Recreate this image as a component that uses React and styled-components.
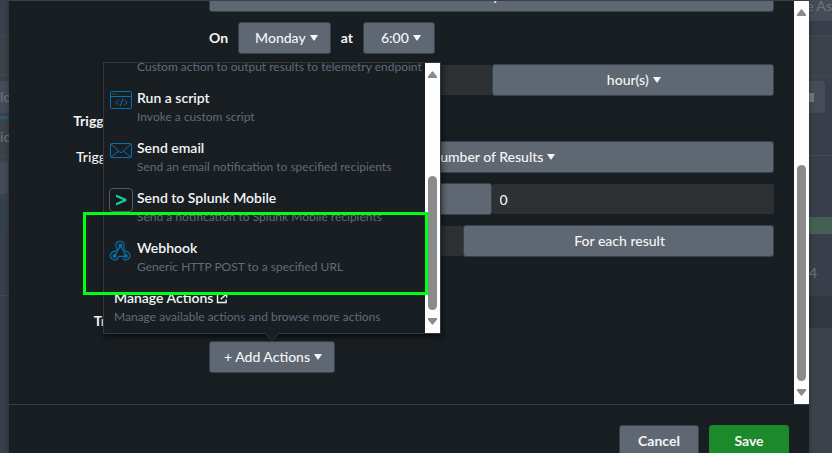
import React from 'react';
import styled, { createGlobalStyle, css } from 'styled-components';

const color = {
  surface: '#191e22',
  field: '#2d3134',
  button: '#5f6773',
  edge: '#36434f',
  text: '#f4f5f6',
  muted: '#626b79',
  icon: '#0a70ad',
  thumb: '#8b8b8b',
  save: '#1c8a2b',
  marker: '#00ff10',
};

const GlobalStyle = createGlobalStyle`
  *, *::before, *::after { box-sizing: border-box; }
  body {
    margin: 0;
    overflow: hidden;
    background: #383f4a;
    color: ${color.text};
    font: 500 14px/20px Lato, "Liberation Sans", sans-serif;
  }
  button, input { font: inherit; color: inherit; }
`;

const Page = styled.div`
  display: grid;
  grid-template-columns: 9px minmax(0, 1fr) 23px;
  height: 100vh;
  overflow: hidden;
`;

const Backdrop = styled.div`
  display: flex;
  flex-direction: column;
  overflow: hidden;
  white-space: nowrap;
  color: #6d737b;
`;

const Band = styled.div`
  display: flex;
  flex: none;
  align-items: center;
  justify-content: ${(p) => (p.$end ? 'flex-end' : 'flex-start')};
  height: ${(p) => p.$h}px;
  background: ${(p) => p.$tone};
  ${(p) => p.$line && css`border-bottom: 1px solid #434951;`}
  ${(p) => p.$fill && css`flex: 1;`}
`;

const BackdropButton = styled.div`
  display: flex;
  flex: none;
  align-items: center;
  width: ${(p) => p.$w}px;
  height: 32px;
  border-radius: 0 4px 4px 0;
  background: #454c57;
`;

const Square = styled.span`
  width: 5px;
  height: 9px;
  background: #73767b;
`;

const Modal = styled.main`
  display: flex;
  flex-direction: column;
  overflow: hidden;
  border-top: 1px solid ${color.edge};
  background: ${color.surface};
  box-shadow: 0 0 5px rgba(0, 0, 0, 0.35);
  z-index: 1;
`;

const Body = styled.div`
  display: flex;
  flex: none;
  overflow: hidden;
`;

const Form = styled.form`
  display: flex;
  flex: 1;
  flex-direction: column;
  gap: 10px;
  min-width: 0;
  margin-top: -21px;
  padding: 0 20px 31px 0;
`;

const Row = styled.div`
  display: grid;
  grid-template-columns: 178px minmax(0, 1fr);
  column-gap: 22px;
  align-items: center;
  min-height: 32px;
`;

const Label = styled.label`
  text-align: right;
  white-space: nowrap;
`;

const Heading = styled.h2`
  width: 178px;
  margin: ${(p) => (p.$far ? 44 : 5)}px 0 0;
  text-align: right;
  white-space: nowrap;
  font: inherit;
  font-weight: 700;
`;

const Controls = styled.div`
  display: grid;
  grid-column: 2;
  grid-template-columns: ${(p) => p.$cols || '1fr'};
  align-items: center;
`;

const Button = styled.button`
  display: flex;
  align-items: center;
  justify-content: center;
  gap: 4px;
  min-width: 72px;
  height: 32px;
  padding: 0 12px 0 14px;
  border: 1px solid ${color.edge};
  border-radius: 3px;
  background: ${color.button};
  white-space: nowrap;
  cursor: pointer;
`;

const Sentence = styled.div`
  display: flex;
  grid-column: 2;
  align-items: center;
  gap: 10px;

  ${Button} { padding-left: 16px; }
`;

const Word = styled.span`
  font-weight: 700;
`;

const FooterButton = styled(Button)`
  width: 80px;
  padding: 0 8px;
  font-weight: 700;
  ${(p) => p.$primary && css`
    border-color: ${color.save};
    background: ${color.save};
  `}
`;

const Field = styled.input`
  width: 100%;
  min-width: 0;
  height: 30px;
  padding: 0 8px;
  border: 0;
  border-radius: 2px;
  outline: 0;
  background: ${color.field};
`;

const Anchor = styled.div`
  position: relative;
  justify-self: start;
`;

const Popover = styled.div`
  position: absolute;
  bottom: calc(100% + 7px);
  left: 50%;
  width: 338px;
  transform: translateX(-50%);
  border: 1px solid #33383d;
  background: ${color.surface};
  box-shadow: 1px 3px 6px rgba(0, 0, 0, 0.6);

  &::after {
    content: '';
    position: absolute;
    top: calc(100% - 4px);
    left: calc(50% - 5px);
    width: 10px;
    height: 10px;
    transform: rotate(45deg);
    border: solid #2c3136;
    border-width: 0 1px 1px 0;
    background: ${color.surface};
  }
`;

const PopoverBody = styled.div`
  display: flex;
  height: 270px;
  overflow: hidden;
`;

const Menu = styled.ul`
  flex: 1;
  margin: -25px 0 0;
  padding: 0;
  list-style: none;
`;

const Item = styled.li`
  display: flex;
  gap: 4px;
  height: 50px;
  padding-left: ${(p) => (p.$plain ? 10 : 5)}px;
`;

const ItemText = styled.div`
  display: grid;
  grid-template-rows: 20px 18px;
`;

const IconBox = styled.span`
  display: flex;
  width: 24px;
  height: 24px;
`;

const ItemTitle = styled.a`
  display: flex;
  align-items: center;
  gap: 3px;
  color: inherit;
  font-weight: 600;
  text-decoration: none;
`;

const ItemNote = styled.p`
  margin: 0;
  color: ${color.muted};
  font-size: 12px;
  font-weight: 400;
  line-height: 18px;
  white-space: nowrap;
`;

const Marker = styled.div`
  position: absolute;
  top: 149px;
  right: 12px;
  left: -21px;
  height: 83px;
  border: 3px solid ${color.marker};
  z-index: 2;
`;

const Bar = styled.div`
  display: flex;
  flex: none;
  flex-direction: column;
  align-items: center;
  width: 15px;
  padding: 8px 0;
  background: #fdfdfd;
`;

const Track = styled.div`
  display: flex;
  flex: 1;
  flex-direction: column;
  justify-content: flex-end;
  padding: 8px 0;
`;

const Thumb = styled.div`
  width: 9px;
  height: ${(p) => p.$size}px;
  border-radius: 5px;
  background: ${color.thumb};
`;

const Footer = styled.footer`
  display: flex;
  flex: none;
  justify-content: flex-end;
  gap: 10px;
  padding: 20px;
  border-top: 1px solid #2f3d49;
`;

const Svg = styled.svg`
  flex: none;
  display: block;
`;

const Caret = () => (
  <Svg width="8" height="6" viewBox="0 0 8 6" aria-hidden="true">
    <path d="M0 0h8L4.6 5.2Q4 6 3.4 5.2z" fill="currentColor" />
  </Svg>
);

const Arrow = ({ down }) => (
  <Svg width="9" height="7" viewBox="0 0 9 7" aria-hidden="true">
    <path
      d={down ? 'M0 0h9v1.5L5.3 6.3q-.8.9-1.6 0L0 1.5z' : 'M0 7h9V5.5L5.3.7q-.8-.9-1.6 0L0 5.5z'}
      fill={color.thumb}
    />
  </Svg>
);

const ScrollBar = ({ size }) => (
  <Bar>
    <Arrow />
    <Track>
      <Thumb $size={size} />
    </Track>
    <Arrow down />
  </Bar>
);

const ScriptIcon = () => (
  <Svg width="24" height="24" viewBox="0 0 24 24" fill="none" stroke={color.icon}>
    <rect x="1.5" y="3.5" width="21" height="17" rx="1" />
    <path d="M2 8.5h20" />
    <path d="M3 6h1M5 6h1M7 6h1" />
    <path d="M10 11.5 7 14.5l3 3M15 11.5l3 3-3 3M13.8 10.5l-2.4 7.5" />
  </Svg>
);

const MailIcon = () => (
  <Svg width="24" height="24" viewBox="0 0 24 24" fill="none" stroke={color.icon}>
    <rect x="1.5" y="5.5" width="21" height="14" rx="1" />
    <path d="M2 6l8.6 8q1.4 1.2 2.8 0L22 6M2 19l7.5-6M22 19l-7.5-6" />
  </Svg>
);

const MobileIcon = () => (
  <Svg width="24" height="24" viewBox="0 0 24 24" fill="none">
    <rect x="0.5" y="0.5" width="23" height="23" rx="3.5" fill="#171b1f" stroke="#555a5f" />
    <path d="M7 6.4 17.4 11v1.9L7 17.5v-2.6l7.3-2.9L7 9z" fill="#12cfa5" />
  </Svg>
);

const WebhookIcon = () => (
  <Svg width="24" height="24" viewBox="0 0 24 24" fill="none" stroke={color.icon} strokeWidth="1.2">
    <path d="M8.4 10.8A4.2 4.2 0 1 1 14.6 9.8L16.6 13.4A4.2 4.2 0 1 1 13.6 20.4" />
    <path d="M8.4 10.8 6.6 13.6A4.2 4.2 0 1 0 9.7 18.4H16" />
    <path d="M11.5 7.6 8.4 13.2 6 17.8M11.5 7.6l2.9 5.6 2.6 4.6" />
    <g fill={color.icon} stroke="none">
      <circle cx="11.5" cy="7.6" r="2" />
      <circle cx="5.6" cy="18" r="2" />
      <circle cx="16.8" cy="18" r="2" />
    </g>
  </Svg>
);

const ExternalIcon = () => (
  <Svg width="12" height="12" viewBox="0 0 12 12" fill="none" stroke="currentColor" strokeWidth="1.4">
    <path d="M4 2.2H1.5v8.3h8.6V7.4M6.2 1.5h4.4v4.2M10.2 1.9 4.8 7.3" />
  </Svg>
);

const actions = [
  { id: 'telemetry', note: 'Custom action to output results to telemetry endpoint' },
  { id: 'script', icon: <ScriptIcon />, title: 'Run a script', note: 'Invoke a custom script' },
  { id: 'email', icon: <MailIcon />, title: 'Send email', note: 'Send an email notification to specified recipients' },
  { id: 'mobile', icon: <MobileIcon />, title: 'Send to Splunk Mobile', note: 'Send a notification to Splunk Mobile recipients' },
  { id: 'webhook', icon: <WebhookIcon />, title: 'Webhook', note: 'Generic HTTP POST to a specified URL' },
];

const Dropdown = ({ children, ...rest }) => (
  <Button type="button" aria-haspopup="listbox" {...rest}>
    {children}
    {children && <Caret />}
  </Button>
);

const ActionsMenu = () => (
  <Popover>
    <PopoverBody>
      <Menu>
        {actions.map((a) => (
          <Item key={a.id}>
            <IconBox>{a.icon}</IconBox>
            <ItemText>
              <ItemTitle href="#">{a.title}</ItemTitle>
              <ItemNote>{a.note}</ItemNote>
            </ItemText>
          </Item>
        ))}
        <Item $plain>
          <ItemText>
            <ItemTitle href="#">
              Manage Actions <ExternalIcon />
            </ItemTitle>
            <ItemNote>Manage available actions and browse more actions</ItemNote>
          </ItemText>
        </Item>
      </Menu>
      <ScrollBar size={134} />
    </PopoverBody>
    <Marker />
  </Popover>
);

export default function App() {
  return (
    <>
      <GlobalStyle />
      <Page>
        <Backdrop aria-hidden="true">
          <Band $h={36} $tone="#3a414c" $line />
          <Band $h={40} $tone="#3c4249" $line />
          <Band $h={5} $tone="#3a414a" />
          <BackdropButton $w={9}>lo</BackdropButton>
          <Band $h={3} $tone="#3a414a" />
          <Band $h={3} $tone="#2c5775" />
          <Band $h={37} $tone="#3b424a" $line>ic</Band>
          <Band $h={6} $tone="#3b424a" />
          <BackdropButton $w={8} />
          <Band $h={5} $tone="#3b424a" />
          <Band $h={35} $tone="#34414d" />
          <Band $h={62} $tone="#383f4a" $line />
          <Band $fill $tone="#383f4a" />
        </Backdrop>

        <Modal>
          <Body>
            <Form>
              <Row>
                <Controls>
                  <Dropdown>Run every week</Dropdown>
                </Controls>
              </Row>
              <Row>
                <Sentence>
                  <Word>On</Word>
                  <Dropdown>Monday</Dropdown>
                  <Word>at</Word>
                  <Dropdown>6:00</Dropdown>
                </Sentence>
              </Row>
              <Row>
                <Controls $cols="1fr 1fr">
                  <Field aria-label="Expires" />
                  <Dropdown>hour(s)</Dropdown>
                </Controls>
              </Row>
              <Heading>Trigger Conditions</Heading>
              <Row>
                <Label htmlFor="trigger">Trigger alert when</Label>
                <Controls>
                  <Dropdown id="trigger">Number of Results</Dropdown>
                </Controls>
              </Row>
              <Row>
                <Controls $cols="1fr 1fr">
                  <Dropdown aria-label="Comparison" />
                  <Field aria-label="Count" defaultValue="0" />
                </Controls>
              </Row>
              <Row>
                <Controls $cols="9fr 11fr">
                  <Field aria-label="Trigger" />
                  <Button type="button">For each result</Button>
                </Controls>
              </Row>
              <Heading $far>Trigger Actions</Heading>
              <Row>
                <Controls>
                  <Anchor>
                    <Dropdown>+ Add Actions</Dropdown>
                    <ActionsMenu />
                  </Anchor>
                </Controls>
              </Row>
            </Form>
            <ScrollBar size={216} />
          </Body>
          <Footer>
            <FooterButton type="button">Cancel</FooterButton>
            <FooterButton type="button" $primary>Save</FooterButton>
          </Footer>
        </Modal>

        <Backdrop aria-hidden="true">
          <Band $h={11} $tone="#454c57" $end>Save As</Band>
          <Band $h={10} $tone="#454c57" />
          <Band $h={15} $tone="#373e49" $line />
          <Band $h={40} $tone="#3c4249" $line />
          <Band $h={5} $tone="#3b424b" />
          <BackdropButton $w={16}>
            <Square />
          </BackdropButton>
          <Band $h={43} $tone="#393f4a" $line />
          <Band $h={61} $tone="#383f4a" />
          <Band $h={17} $tone="#465f55" />
          <Band $h={16} $tone="#383f4a" />
          <Band $h={46} $tone="#383f4a">4</Band>
          <Band $h={32} $tone="#31373f" />
          <Band $fill $tone="#3c4249" />
        </Backdrop>
      </Page>
    </>
  );
}
